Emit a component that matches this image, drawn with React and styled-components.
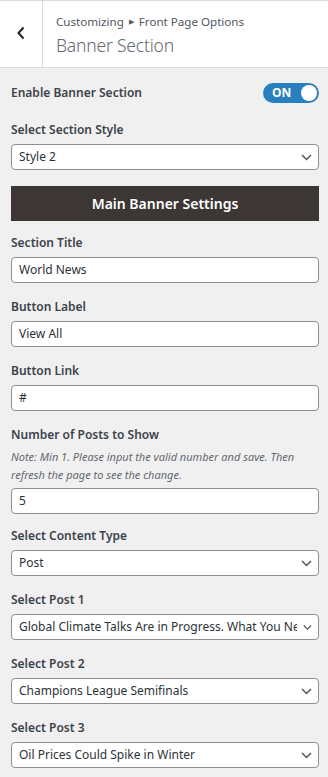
import styled, { createGlobalStyle } from 'styled-components';

const GlobalStyle = createGlobalStyle`
  body {
    margin: 0;
    background: #f0f0f1;
    font-family: "Noto Sans", "Liberation Sans", sans-serif;
    color: #3c434a;
  }
  * { box-sizing: border-box; }
`;

const Panel = styled.div`
  width: 328px;
  min-height: 777px;
  background: #f0f0f1;
`;

const Header = styled.header`
  display: flex;
  height: 68px;
  background: #fff;
  border-top: 1px solid #dcdcde;
  border-bottom: 1px solid #dcdcde;
`;

const BackButton = styled.button`
  width: 43px;
  flex: none;
  border: 0;
  border-right: 1px solid #dcdcde;
  background: #fff;
  display: flex;
  align-items: center;
  justify-content: center;
  padding: 0 0 2px;
  color: #1d2327;
`;

const HeaderTitle = styled.div`
  padding: 11px 0 0 13px;
  display: flex;
  flex-direction: column;
`;

const Crumb = styled.span`
  font-size: 11.6px;
  line-height: 20px;
  color: #50575e;
  display: flex;
  align-items: center;
  gap: 5px;

  i {
    font-style: normal;
    font-size: 7px;
  }
`;

const PageTitle = styled.h1`
  margin: 0;
  font-size: 17.5px;
  font-weight: 300;
  letter-spacing: -0.2px;
  line-height: 26px;
  color: #646970;
`;

const Content = styled.div`
  padding: 15px 9px 10px 11px;
  display: flex;
  flex-direction: column;
`;

const ToggleRow = styled.div`
  display: flex;
  align-items: center;
  justify-content: space-between;
  height: 20px;
  margin-bottom: 17px;
`;

const Label = styled.label`
  display: block;
  font-size: 12px;
  font-weight: 600;
  line-height: 20px;
  color: #3c434a;
  margin-bottom: ${p => (p.$tight ? '3px' : '4px')};
`;

const Toggle = styled.span`
  width: 56px;
  height: 20px;
  border-radius: 10px;
  background: #2a7fbf;
  display: flex;
  align-items: center;
  justify-content: space-between;
  padding: 0 2px 1px 9px;
  color: #fff;
  font-size: 12px;
  font-weight: 700;

  &:after {
    content: '';
    width: 16px;
    height: 16px;
    margin-top: 1px;
    border-radius: 50%;
    background: #fff;
  }
`;

const Field = styled.div`
  margin-bottom: ${p => p.$gap || 14}px;
`;

const Input = styled.div`
  height: 26px;
  width: 100%;
  border: 1px solid #8c8f94;
  border-radius: 4px;
  background: #fff;
  font-size: 12px;
  line-height: 24px;
  padding: 0 7px;
  color: #2c3338;
  white-space: nowrap;
  overflow: hidden;
`;

const Select = styled(Input)`
  display: flex;
  align-items: center;
  justify-content: space-between;
  gap: 6px;
  padding-right: 6px;

  span {
    overflow: hidden;
    white-space: nowrap;
  }
`;

const Note = styled.p`
  margin: 0 0 4px;
  font-size: 11px;
  font-style: italic;
  line-height: 18px;
  color: #646970;
`;

const Banner = styled.div`
  height: 35px;
  background: #3c3634;
  color: #fff;
  display: flex;
  align-items: center;
  justify-content: center;
  font-size: 14px;
  font-weight: 600;
  margin: 0 0 12px;
`;

const Chevron = () => (
  <svg width="11" height="7" viewBox="0 0 11 7" fill="none">
    <path d="M1 1l4.5 4.5L10 1" stroke="#50575e" strokeWidth="1.5" />
  </svg>
);

const TextField = ({ label, value }) => (
  <Field>
    <Label>{label}</Label>
    <Input>{value}</Input>
  </Field>
);

const SelectField = ({ label, value, gap }) => (
  <Field $gap={gap}>
    <Label>{label}</Label>
    <Select>
      <span>{value}</span>
      <Chevron />
    </Select>
  </Field>
);

export default function App() {
  return (
    <Panel>
      <GlobalStyle />
      <Header>
        <BackButton>
          <svg width="10" height="14" viewBox="0 0 10 14" fill="none">
            <path d="M7.5 1.5L2.5 7l5 5.5" stroke="#1d2327" strokeWidth="2" />
          </svg>
        </BackButton>
        <HeaderTitle>
          <Crumb>
            Customizing <i>▶</i> Front Page Options
          </Crumb>
          <PageTitle>Banner Section</PageTitle>
        </HeaderTitle>
      </Header>
      <Content>
        <ToggleRow>
          <Label as="span" style={{ marginBottom: 0 }}>Enable Banner Section</Label>
          <Toggle>ON</Toggle>
        </ToggleRow>
        <SelectField label="Select Section Style" value="Style 2" gap={16} />
        <Banner>Main Banner Settings</Banner>
        <TextField label="Section Title" value="World News" />
        <TextField label="Button Label" value="View All" />
        <TextField label="Button Link" value="#" />
        <Field $gap={12}>
          <Label $tight>Number of Posts to Show</Label>
          <Note>
            Note: Min 1. Please input the valid number and save. Then refresh the page to see the change.
          </Note>
          <Input>5</Input>
        </Field>
        <SelectField label="Select Content Type" value="Post" />
        <SelectField
          label="Select Post 1"
          value="Global Climate Talks Are in Progress. What You Need to Know"
        />
        <SelectField label="Select Post 2" value="Champions League Semifinals" />
        <SelectField label="Select Post 3" value="Oil Prices Could Spike in Winter" />
      </Content>
    </Panel>
  );
}
